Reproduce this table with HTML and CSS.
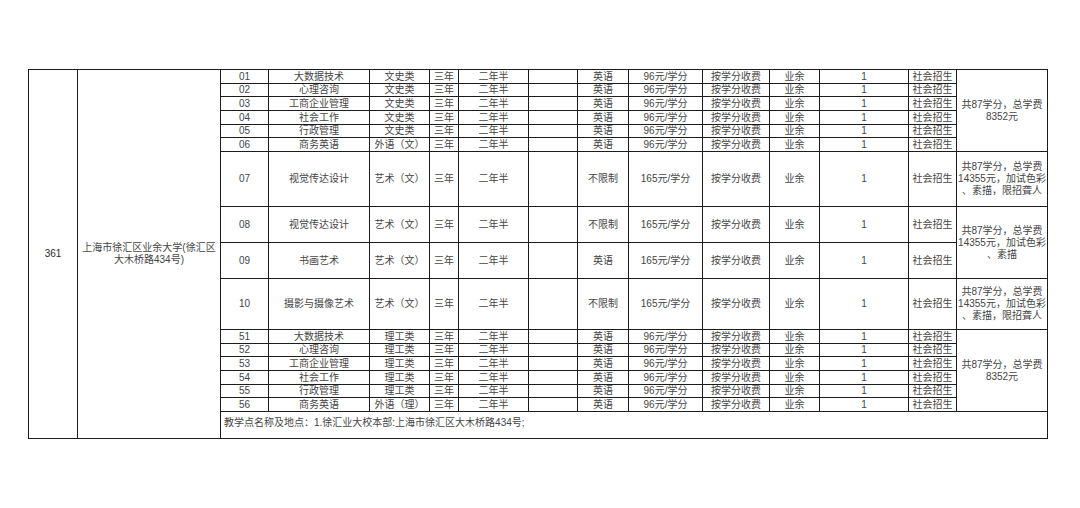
FILE: index.html
```html
<!DOCTYPE html>
<html lang="zh-CN">
<head>
<meta charset="utf-8">
<title>招生计划表</title>
<link rel="stylesheet" href="styles.css">
</head>
<body>
<div class="sheet">
  <div class="c id">361</div>
  <div class="c school">上海市徐汇区业余大学(徐汇区<br>大木桥路434号)</div>

  <div class="c note n1">共87学分，总学费<br>8352元</div>
  <div class="c note n2">共87学分，总学费<br>14355元，加试色彩<br>、素描，限招聋人</div>
  <div class="c note n3">共87学分，总学费<br>14355元，加试色彩<br>、素描</div>
  <div class="c note n4">共87学分，总学费<br>14355元，加试色彩<br>、素描，限招聋人</div>
  <div class="c note n5">共87学分，总学费<br>8352元</div>

  <div class="c">01</div><div class="c">大数据技术</div><div class="c">文史类</div><div class="c">三年</div><div class="c">二年半</div><div class="c"></div><div class="c">英语</div><div class="c">96元/学分</div><div class="c">按学分收费</div><div class="c">业余</div><div class="c">1</div><div class="c">社会招生</div>
  <div class="c">02</div><div class="c">心理咨询</div><div class="c">文史类</div><div class="c">三年</div><div class="c">二年半</div><div class="c"></div><div class="c">英语</div><div class="c">96元/学分</div><div class="c">按学分收费</div><div class="c">业余</div><div class="c">1</div><div class="c">社会招生</div>
  <div class="c">03</div><div class="c">工商企业管理</div><div class="c">文史类</div><div class="c">三年</div><div class="c">二年半</div><div class="c"></div><div class="c">英语</div><div class="c">96元/学分</div><div class="c">按学分收费</div><div class="c">业余</div><div class="c">1</div><div class="c">社会招生</div>
  <div class="c">04</div><div class="c">社会工作</div><div class="c">文史类</div><div class="c">三年</div><div class="c">二年半</div><div class="c"></div><div class="c">英语</div><div class="c">96元/学分</div><div class="c">按学分收费</div><div class="c">业余</div><div class="c">1</div><div class="c">社会招生</div>
  <div class="c">05</div><div class="c">行政管理</div><div class="c">文史类</div><div class="c">三年</div><div class="c">二年半</div><div class="c"></div><div class="c">英语</div><div class="c">96元/学分</div><div class="c">按学分收费</div><div class="c">业余</div><div class="c">1</div><div class="c">社会招生</div>
  <div class="c">06</div><div class="c">商务英语</div><div class="c">外语（文）</div><div class="c">三年</div><div class="c">二年半</div><div class="c"></div><div class="c">英语</div><div class="c">96元/学分</div><div class="c">按学分收费</div><div class="c">业余</div><div class="c">1</div><div class="c">社会招生</div>
  <div class="c">07</div><div class="c">视觉传达设计</div><div class="c">艺术（文）</div><div class="c">三年</div><div class="c">二年半</div><div class="c"></div><div class="c">不限制</div><div class="c">165元/学分</div><div class="c">按学分收费</div><div class="c">业余</div><div class="c">1</div><div class="c">社会招生</div>
  <div class="c">08</div><div class="c">视觉传达设计</div><div class="c">艺术（文）</div><div class="c">三年</div><div class="c">二年半</div><div class="c"></div><div class="c">不限制</div><div class="c">165元/学分</div><div class="c">按学分收费</div><div class="c">业余</div><div class="c">1</div><div class="c">社会招生</div>
  <div class="c">09</div><div class="c">书画艺术</div><div class="c">艺术（文）</div><div class="c">三年</div><div class="c">二年半</div><div class="c"></div><div class="c">英语</div><div class="c">165元/学分</div><div class="c">按学分收费</div><div class="c">业余</div><div class="c">1</div><div class="c">社会招生</div>
  <div class="c">10</div><div class="c">摄影与摄像艺术</div><div class="c">艺术（文）</div><div class="c">三年</div><div class="c">二年半</div><div class="c"></div><div class="c">不限制</div><div class="c">165元/学分</div><div class="c">按学分收费</div><div class="c">业余</div><div class="c">1</div><div class="c">社会招生</div>
  <div class="c">51</div><div class="c">大数据技术</div><div class="c">理工类</div><div class="c">三年</div><div class="c">二年半</div><div class="c"></div><div class="c">英语</div><div class="c">96元/学分</div><div class="c">按学分收费</div><div class="c">业余</div><div class="c">1</div><div class="c">社会招生</div>
  <div class="c">52</div><div class="c">心理咨询</div><div class="c">理工类</div><div class="c">三年</div><div class="c">二年半</div><div class="c"></div><div class="c">英语</div><div class="c">96元/学分</div><div class="c">按学分收费</div><div class="c">业余</div><div class="c">1</div><div class="c">社会招生</div>
  <div class="c">53</div><div class="c">工商企业管理</div><div class="c">理工类</div><div class="c">三年</div><div class="c">二年半</div><div class="c"></div><div class="c">英语</div><div class="c">96元/学分</div><div class="c">按学分收费</div><div class="c">业余</div><div class="c">1</div><div class="c">社会招生</div>
  <div class="c">54</div><div class="c">社会工作</div><div class="c">理工类</div><div class="c">三年</div><div class="c">二年半</div><div class="c"></div><div class="c">英语</div><div class="c">96元/学分</div><div class="c">按学分收费</div><div class="c">业余</div><div class="c">1</div><div class="c">社会招生</div>
  <div class="c">55</div><div class="c">行政管理</div><div class="c">理工类</div><div class="c">三年</div><div class="c">二年半</div><div class="c"></div><div class="c">英语</div><div class="c">96元/学分</div><div class="c">按学分收费</div><div class="c">业余</div><div class="c">1</div><div class="c">社会招生</div>
  <div class="c">56</div><div class="c">商务英语</div><div class="c">外语（理）</div><div class="c">三年</div><div class="c">二年半</div><div class="c"></div><div class="c">英语</div><div class="c">96元/学分</div><div class="c">按学分收费</div><div class="c">业余</div><div class="c">1</div><div class="c">社会招生</div>

  <div class="c foot">教学点名称及地点：1.徐汇业大校本部:上海市徐汇区大木桥路434号;</div>
</div>
</body>
</html>
```

FILE: styles.css
```css
* { box-sizing: border-box; }
html, body { margin: 0; padding: 0; background: #fff; }
body { width: 1080px; height: 508px; overflow: hidden; }

.sheet {
  margin: 69px 0 0 28px;
  width: 1020px;
  display: grid;
  grid-template-columns: 48px 142px 47px 100px 59px 28px 69px 48px 50px 73px 66px 49px 88px 47px 90px;
  grid-template-rows:
    13px 12px 13px 13px 12px 13px
    54px 35px 35px 50px
    13px 12px 13px 13px 12px 13px
    26px;
  gap: 1px;
  padding: 1px;
  background: #1c1c1c;
  font-family: "Liberation Sans", "Noto Sans CJK SC", sans-serif;
  font-size: 10px;
  line-height: 1;
  color: #454545;
}

.c {
  background: #fff;
  display: flex;
  align-items: center;
  justify-content: center;
  text-align: center;
  white-space: nowrap;
  overflow: hidden;
}

.id { grid-column: 1; grid-row: 1 / -1; color: #2a2a2a; }
.school { grid-column: 2; grid-row: 1 / -1; line-height: 12px; }

.note { grid-column: 15; line-height: 12px; }
.n1 { grid-row: 1 / 7; }
.n2 { grid-row: 7 / 8; }
.n3 { grid-row: 8 / 10; }
.n4 { grid-row: 10 / 11; }
.n5 { grid-row: 11 / 17; }

.foot {
  grid-column: 3 / 16;
  justify-content: flex-start;
  padding: 0 0 4px 3px;
}
```
